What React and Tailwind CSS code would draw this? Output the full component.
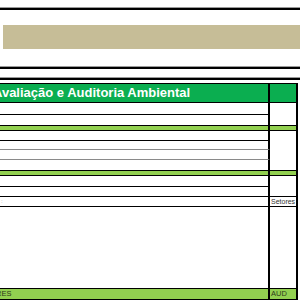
const font = { fontFamily: '"Liberation Sans", Arial, sans-serif' };

const Row = ({ h, line = "", full = "", bg = "", children, right }) => (
  <div className={`flex w-[298px] ${h} ${full} ${bg}`}>
    <div className={`w-[270px] h-full border-r-2 border-r-black overflow-hidden ${line}`}>
      {children}
    </div>
    <div className="w-[28px] h-full border-r-2 border-r-black overflow-hidden">{right}</div>
  </div>
);

const DoubleLine = () => (
  <div className="w-full">
    <div className="h-px bg-[#9a9a9a]" />
    <div className="h-[2px] bg-black" />
  </div>
);

export default function App() {
  return (
    <div className="w-[300px] h-[300px] bg-white overflow-hidden flex flex-col" style={font}>
      <div className="h-[7px] shrink-0" />
      <DoubleLine />
      <div className="h-[15px] shrink-0" />
      <div className="ml-[3px] h-[24px] shrink-0 bg-[#c6bd97]" />
      <div className="h-[17px] shrink-0" />
      <DoubleLine />
      <div className="h-[8px] shrink-0" />
      <DoubleLine />
      <div className="h-[3px] shrink-0" />

      {/* header */}
      <Row h="h-[20px] shrink-0" full="border-y border-black" bg="bg-[#0bae50]">
        <div className="ml-[-7px] mt-[1px] text-[13px] leading-[16px] font-bold text-white whitespace-nowrap">
          Avaliação e Auditoria Ambiental
        </div>
      </Row>
      <Row h="h-[12px] shrink-0" line="border-b border-b-black" />
      <Row h="h-[10px] shrink-0" />
      <Row h="h-[6px] shrink-0" full="border-y border-black" bg="bg-[#92d050]" />
      <Row h="h-[10px] shrink-0" line="border-b border-b-black" />
      <Row h="h-[9px] shrink-0" line="border-b border-b-[#8a8a8a]" />
      <Row h="h-[10px] shrink-0" line="border-b border-b-[#8a8a8a]" />
      <Row h="h-[10px] shrink-0" />
      <Row h="h-[6px] shrink-0" full="border-y border-black" bg="bg-[#92d050]" />
      <Row h="h-[11px] shrink-0" line="border-b border-b-black" />
      <Row h="h-[10px] shrink-0" full="border-b border-black" />
      <Row
        h="h-[10px] shrink-0"
        full="border-b border-black"
        right={<div className="ml-[1px] text-[7px] leading-[9px] text-[#333]">Setores</div>}
      >
        <div className="ml-[1px] text-[6px] leading-[9px] text-[#999]">:</div>
      </Row>
      <Row h="h-[81px] shrink-0" />
      <Row
        h="h-[12px] shrink-0"
        full="border-y border-black"
        bg="bg-[#92d050]"
        right={<div className="ml-[1px] text-[7.5px] leading-[10px] text-[#2f3a1a]">AUD</div>}
      >
        <div className="ml-[-4px] text-[7.5px] leading-[10px] text-[#2f3a1a]">RES</div>
      </Row>
      <div className="flex-1" />
    </div>
  );
}
